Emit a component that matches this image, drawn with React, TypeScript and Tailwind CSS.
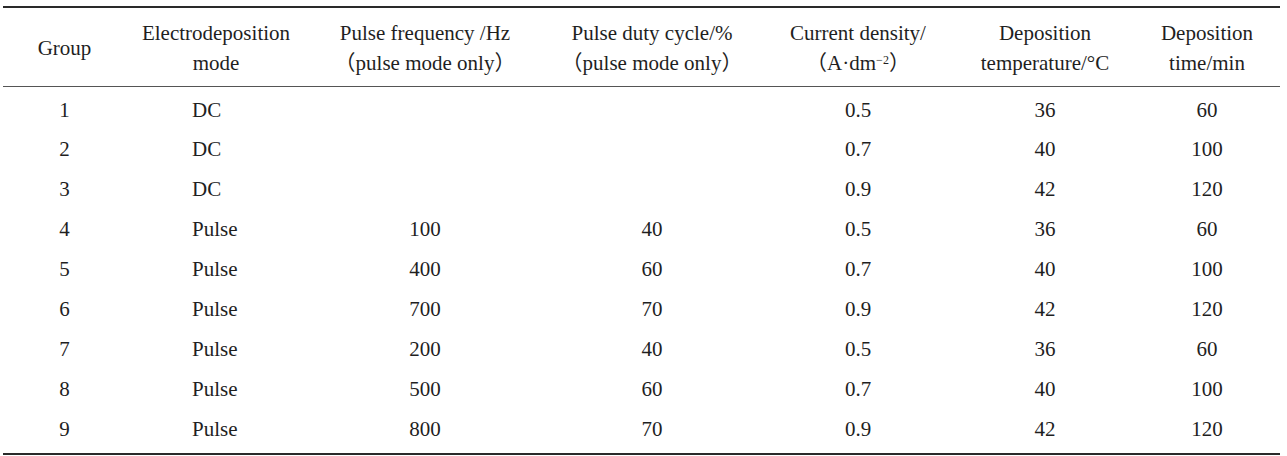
const rows = [
  { group: 1, mode: "DC", freq: "", duty: "", current: "0.5", temp: "36", time: "60" },
  { group: 2, mode: "DC", freq: "", duty: "", current: "0.7", temp: "40", time: "100" },
  { group: 3, mode: "DC", freq: "", duty: "", current: "0.9", temp: "42", time: "120" },
  { group: 4, mode: "Pulse", freq: "100", duty: "40", current: "0.5", temp: "36", time: "60" },
  { group: 5, mode: "Pulse", freq: "400", duty: "60", current: "0.7", temp: "40", time: "100" },
  { group: 6, mode: "Pulse", freq: "700", duty: "70", current: "0.9", temp: "42", time: "120" },
  { group: 7, mode: "Pulse", freq: "200", duty: "40", current: "0.5", temp: "36", time: "60" },
  { group: 8, mode: "Pulse", freq: "500", duty: "60", current: "0.7", temp: "40", time: "100" },
  { group: 9, mode: "Pulse", freq: "800", duty: "70", current: "0.9", temp: "42", time: "120" },
];

export default function App() {
  return (
    <div className="w-[1287px] h-[456px] bg-white pt-[6px] font-['Liberation_Serif','Noto_Sans_CJK_SC',serif] text-[21px] text-[#1f1f1f]">
      <table className="ml-[3px] w-[1277px] table-fixed border-collapse border-t-2 border-b-2 border-[#2a2a2a]">
        <colgroup>
          <col className="w-[123px]" />
          <col className="w-[180px]" />
          <col className="w-[238px]" />
          <col className="w-[216px]" />
          <col className="w-[196px]" />
          <col className="w-[178px]" />
          <col className="w-[146px]" />
        </colgroup>
        <thead>
          <tr className="h-[79px] border-b border-[#555] leading-[30px]">
            <th className="font-normal text-center pt-[2px]">Group</th>
            <th className="font-normal text-center pt-[2px]">
              Electrodeposition
              <br />
              mode
            </th>
            <th className="font-normal text-center pt-[2px]">
              Pulse frequency /Hz
              <br />
              （pulse mode only）
            </th>
            <th className="font-normal text-center pt-[2px]">
              Pulse duty cycle/%
              <br />
              （pulse mode only）
            </th>
            <th className="font-normal text-center pt-[2px]">
              Current density/
              <br />
              （A·dm<sup className="text-[12px]">−2</sup>）
            </th>
            <th className="font-normal text-center pt-[2px]">
              Deposition
              <br />
              temperature/°C
            </th>
            <th className="font-normal text-center pt-[2px]">
              Deposition
              <br />
              time/min
            </th>
          </tr>
        </thead>
        <tbody>
          {rows.map((row, index) => (
            <tr key={row.group} className={index === 8 ? "h-[47px]" : "h-[40px]"}>
              <td className={index === 8 ? "text-center pt-[8px] pb-[7px]" : "text-center pt-[8px]"}>{row.group}</td>
              <td className={index === 8 ? "pl-[66px] pt-[8px] pb-[7px]" : "pl-[66px] pt-[8px]"}>{row.mode}</td>
              <td className={index === 8 ? "text-center pt-[8px] pb-[7px]" : "text-center pt-[8px]"}>{row.freq}</td>
              <td className={index === 8 ? "text-center pt-[8px] pb-[7px]" : "text-center pt-[8px]"}>{row.duty}</td>
              <td className={index === 8 ? "text-center pt-[8px] pb-[7px]" : "text-center pt-[8px]"}>{row.current}</td>
              <td className={index === 8 ? "text-center pt-[8px] pb-[7px]" : "text-center pt-[8px]"}>{row.temp}</td>
              <td className={index === 8 ? "text-center pt-[8px] pb-[7px]" : "text-center pt-[8px]"}>{row.time}</td>
            </tr>
          ))}
        </tbody>
      </table>
    </div>
  );
}
